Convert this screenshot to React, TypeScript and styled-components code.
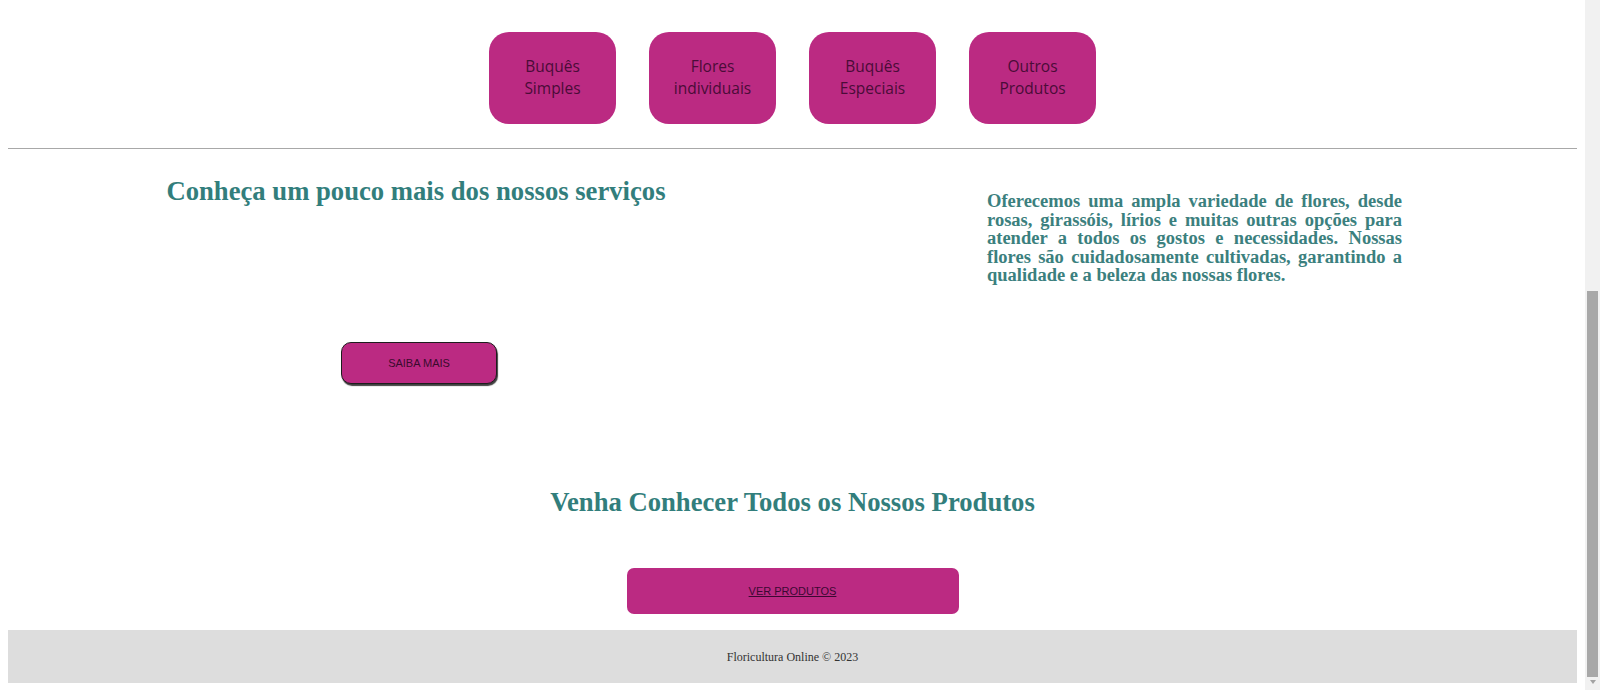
import React from "react";
import styled, { createGlobalStyle } from "styled-components";

const GlobalStyle = createGlobalStyle`
  html, body {
    margin: 0;
    height: 100%;
    overflow: hidden;
    background: #ffffff;
    font-family: "Liberation Serif", "Times New Roman", serif;
  }
`;

const MAGENTA = "#bb2a82";
const TEAL = "#327e7c";

/* ---------- window frame: page + browser scrollbar ---------- */
const Viewport = styled.div`
  display: flex;
  height: 690px;
  overflow: hidden;
`;

const Page = styled.div`
  flex: 1;
  min-width: 0;
  box-sizing: border-box;
  padding: 8px;
  overflow: hidden;
`;

const ScrollTrack = styled.div`
  width: 15px;
  flex: 0 0 15px;
  display: flex;
  flex-direction: column;
  align-items: center;
  background: #f1f1f1;
`;

const ScrollThumb = styled.div`
  margin-top: 291px;
  width: 11px;
  height: 386px;
  background: #a8a8a8;
`;

const ScrollArrow = styled.div`
  margin-top: auto;
  margin-bottom: 6px;
  width: 0;
  height: 0;
  border-left: 3.5px solid transparent;
  border-right: 3.5px solid transparent;
  border-top: 4px solid #a3a3a3;
`;

/* ---------- category buttons ---------- */
const CategoryNav = styled.nav`
  display: flex;
  justify-content: center;
  gap: 33px;
  padding: 24px 0;
`;

const CategoryButton = styled.a`
  box-sizing: border-box;
  width: 127px;
  height: 92px;
  display: flex;
  flex-direction: column;
  align-items: center;
  justify-content: center;
  background: ${MAGENTA};
  border-radius: 20px;
  color: #4a0c38;
  font-family: "Open Sans", "Noto Sans", sans-serif;
  font-size: 15.5px;
  line-height: 21.7px;
  text-align: center;
  text-decoration: none;
`;

const ButtonLine = styled.span`
  display: block;
`;

const Divider = styled.hr`
  margin: 0;
  height: 1px;
  border: 0;
  background: #a8a8a8;
`;

/* ---------- services ---------- */
const Services = styled.section`
  display: flex;
  align-items: flex-start;
`;

const ServicesIntro = styled.div`
  width: 816px;
  display: flex;
  flex-direction: column;
  align-items: center;
`;

const SectionTitle = styled.h2<{ $top: number }>`
  margin: ${(p) => p.$top}px 0 0;
  font-size: 26.67px;
  font-weight: bold;
  line-height: normal;
  color: ${TEAL};
  text-align: center;
`;

const MoreButton = styled.button`
  box-sizing: border-box;
  margin: 135px 0 0 6px;
  width: 156px;
  height: 42px;
  border: 1px solid #1d1d1d;
  border-radius: 10px;
  box-shadow: 1px 2px 1px rgba(0, 0, 0, 0.75);
  background: ${MAGENTA};
  color: #3a0a2d;
  font-family: "Liberation Sans", Arial, sans-serif;
  font-size: 11px;
  cursor: pointer;
`;

const About = styled.p`
  margin: 43px 0 0 163px;
  width: 415px;
  font-size: 18.5px;
  font-weight: bold;
  line-height: 18.5px;
  text-align: justify;
  color: #3b807e;
`;

/* ---------- products ---------- */
const Products = styled.section`
  display: flex;
  flex-direction: column;
  align-items: center;
`;

const ProductsButton = styled.a`
  box-sizing: border-box;
  margin-top: 50px;
  width: 332px;
  height: 46px;
  display: flex;
  align-items: center;
  justify-content: center;
  border-radius: 7px;
  background: ${MAGENTA};
  color: #3b0832;
  font-family: "Liberation Sans", Arial, sans-serif;
  font-size: 11px;
  text-decoration: underline;
`;

/* ---------- footer ---------- */
const Footer = styled.footer`
  margin-top: 16px;
  padding: 19.5px 0;
  background: #dddddd;
  text-align: center;
`;

const FooterText = styled.p`
  margin: 0;
  font-size: 12px;
  line-height: 14px;
  color: #333333;
`;

const categories = [
  ["Buquês", "Simples"],
  ["Flores", "individuais"],
  ["Buquês", "Especiais"],
  ["Outros", "Produtos"],
];

export default function App() {
  return (
    <>
      <GlobalStyle />
      <Viewport>
        <Page>
          <CategoryNav>
            {categories.map((lines) => (
              <CategoryButton key={lines.join(" ")} href="#">
                {lines.map((l) => (
                  <ButtonLine key={l}>{l}</ButtonLine>
                ))}
              </CategoryButton>
            ))}
          </CategoryNav>
          <Divider />

          <Services>
            <ServicesIntro>
              <SectionTitle $top={27}>Conheça um pouco mais dos nossos serviços</SectionTitle>
              <MoreButton>SAIBA MAIS</MoreButton>
            </ServicesIntro>
            <About>
              Oferecemos uma ampla variedade de flores, desde rosas, girassóis,
              lírios e muitas outras opções para atender a todos os gostos e
              necessidades. Nossas flores são cuidadosamente cultivadas,
              garantindo a qualidade e a beleza das nossas flores.
            </About>
          </Services>

          <Products>
            <SectionTitle $top={103}>Venha Conhecer Todos os Nossos Produtos</SectionTitle>
            <ProductsButton href="#">VER PRODUTOS</ProductsButton>
          </Products>

          <Footer>
            <FooterText>Floricultura Online © 2023</FooterText>
          </Footer>
        </Page>
        <ScrollTrack aria-hidden="true">
          <ScrollThumb />
          <ScrollArrow />
        </ScrollTrack>
      </Viewport>
    </>
  );
}
